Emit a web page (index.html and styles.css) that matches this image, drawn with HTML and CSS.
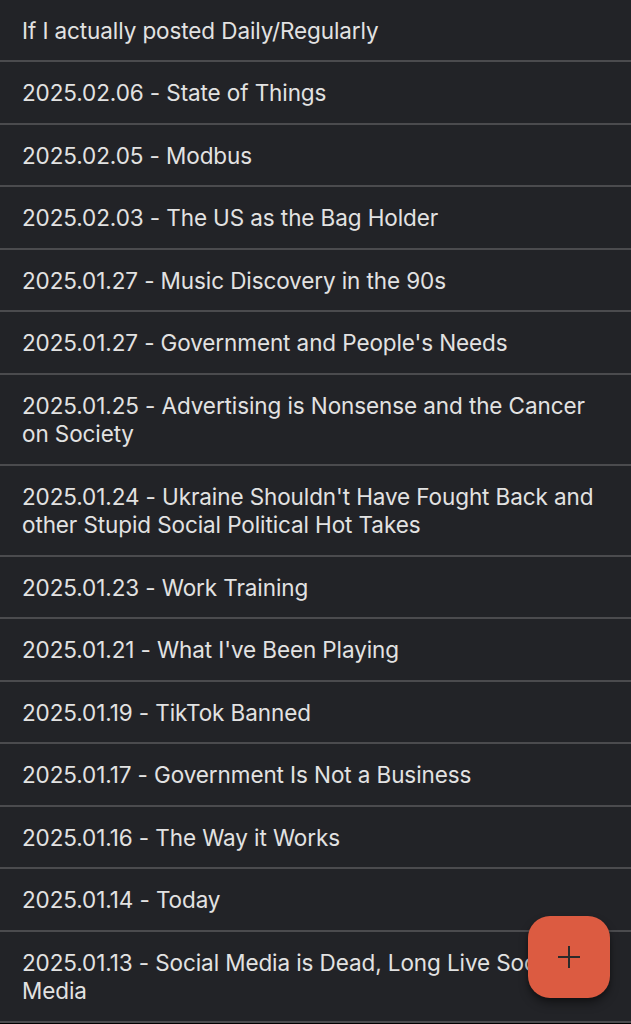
FILE: index.html
```html
<!DOCTYPE html>
<html lang="en">
<head>
<meta charset="utf-8">
<title>Posts</title>
<link rel="stylesheet" href="styles.css">
</head>
<body>
<ul class="post-list">
  <li class="post">If I actually posted Daily/Regularly</li>
  <li class="post">2025.02.06 - State of Things</li>
  <li class="post">2025.02.05 - Modbus</li>
  <li class="post">2025.02.03 - The US as the Bag Holder</li>
  <li class="post">2025.01.27 - Music Discovery in the 90s</li>
  <li class="post">2025.01.27 - Government and People's Needs</li>
  <li class="post">2025.01.25 - Advertising is Nonsense and the Cancer on Society</li>
  <li class="post">2025.01.24 - Ukraine Shouldn't Have Fought Back and other Stupid Social Political Hot Takes</li>
  <li class="post">2025.01.23 - Work Training</li>
  <li class="post">2025.01.21 - What I've Been Playing</li>
  <li class="post">2025.01.19 - TikTok Banned</li>
  <li class="post">2025.01.17 - Government Is Not a Business</li>
  <li class="post">2025.01.16 - The Way it Works</li>
  <li class="post">2025.01.14 - Today</li>
  <li class="post">2025.01.13 - Social Media is Dead, Long Live Social Media</li>
</ul>
<button class="fab" aria-label="Add">
  <svg viewBox="0 0 24 24" width="24" height="24" aria-hidden="true">
    <path d="M12 1v22M1 12h22" stroke="#2b2a2a" stroke-width="2" fill="none"/>
  </svg>
</button>
</body>
</html>
```
FILE: styles.css
```css
html, body {
  margin: 0;
  padding: 0;
  background: #000;
  height: 100%;
  overflow: hidden;
}
body {
  font-family: "Inter", "Noto Sans", sans-serif;
  color: #e2e2e2;
}
.post-list {
  list-style: none;
  margin: -0.5px 0 0 0;
  padding: 0;
  background: #222327;
}
.post {
  padding: 17px 22px 15px;
  font-size: 22.5px;
  line-height: 28.5px;
  letter-spacing: -0.1px;
  border-bottom: 2px solid #4b4b4e;
  background: #222327;
}
.fab {
  position: fixed;
  right: 21px;
  bottom: 26px;
  width: 82px;
  height: 82px;
  border: none;
  border-radius: 22px;
  background: #dc5b41;
  display: flex;
  align-items: center;
  justify-content: center;
  padding: 0;
  box-shadow: 0 6px 10px rgba(0, 0, 0, 0.35), 0 2px 4px rgba(0, 0, 0, 0.25);
}
```
